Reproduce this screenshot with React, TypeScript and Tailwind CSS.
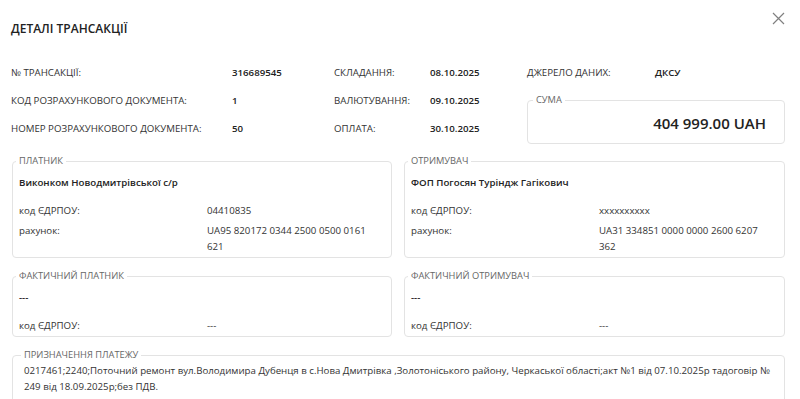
import { ReactNode } from "react";

const INFO = [
  ["№ ТРАНСАКЦІЇ:", "316689545", "СКЛАДАННЯ:", "08.10.2025"],
  ["КОД РОЗРАХУНКОВОГО ДОКУМЕНТА:", "1", "ВАЛЮТУВАННЯ:", "09.10.2025"],
  ["НОМЕР РОЗРАХУНКОВОГО ДОКУМЕНТА:", "50", "ОПЛАТА:", "30.10.2025"],
];

function Box({ title, children, className = "" }: { title: string; children: ReactNode; className?: string }) {
  return (
    <fieldset className={`rounded-[4px] border border-[#e3e3e3] ${className}`}>
      <legend className="-ml-[3px] px-[3px] text-left text-[9.3px] leading-[12px] text-[#666]">{title}</legend>
      {children}
    </fieldset>
  );
}

function Party({ title, name, code, account }: { title: string; name: string; code: string; account?: string }) {
  return (
    <Box title={title} className="px-[6px] pb-[2px]">
      <div className="pt-[8px] font-semibold leading-[16px] text-[#222]">{name}</div>
      <div className="mt-[12px] flex flex-col gap-[4px]">
        <div className="grid grid-cols-[188px_1fr] leading-[16px]">
          <span>код ЄДРПОУ:</span>
          <span>{code}</span>
        </div>
        {account && (
          <div className="grid grid-cols-[188px_1fr] leading-[16px]">
            <span>рахунок:</span>
            <span className="pr-[8px]">{account}</span>
          </div>
        )}
      </div>
    </Box>
  );
}

export default function App() {
  return (
    <div className="min-h-[399px] bg-white pl-[11px] pr-[15px] font-['Open_Sans',sans-serif] text-[9.7px] text-[#333]">
      {/* заголовок */}
      <div className="flex items-start justify-between pt-[12px]">
        <h2 className="mt-[9px] text-[12px] font-semibold leading-[16px] text-[#222]">ДЕТАЛІ ТРАНСАКЦІЇ</h2>
        <button className="text-[#808080]">
          <svg width="13" height="13" viewBox="0 0 13 13" fill="none" stroke="currentColor" strokeWidth="1.2">
            <path d="M1 1l11 11M12 1L1 12" />
          </svg>
        </button>
      </div>

      {/* основні дані */}
      <div className="mt-[22px] flex">
        <div className="grid w-[516px] grid-cols-[221px_102px_96px_97px]">
          {INFO.map((row) => (
            <div key={row[0]} className="contents">
              <div className="flex h-[28px] items-center">{row[0]}</div>
              <div className="flex h-[28px] items-center font-semibold text-[#222]">{row[1]}</div>
              <div className="flex h-[28px] items-center">{row[2]}</div>
              <div className="flex h-[28px] items-center font-semibold text-[#222]">{row[3]}</div>
            </div>
          ))}
        </div>
        <div className="flex-1">
          <div className="grid h-[28px] grid-cols-[128px_1fr] items-center">
            <span>ДЖЕРЕЛО ДАНИХ:</span>
            <span className="font-semibold text-[#222]">ДКСУ</span>
          </div>
          <Box title="СУМА" className="mt-[7px] pb-[10px] pl-[8px] pr-[18px] pt-[7px]">
            <div className="text-right text-[15px] font-semibold leading-[20px] text-[#222]">404 999.00 UAH</div>
          </Box>
        </div>
      </div>

      {/* платник / отримувач */}
      <div className="mt-[11px] grid grid-cols-[380px_1fr] gap-x-[12px] gap-y-[12px] pl-[1px]">
        <Party
          title="ПЛАТНИК"
          name="Виконком Новодмитрівської с/р"
          code="04410835"
          account="UA95 820172 0344 2500 0500 0161 621"
        />
        <Party
          title="ОТРИМУВАЧ"
          name="ФОП Погосян Туріндж Гагікович"
          code="xxxxxxxxxx"
          account="UA31 334851 0000 0000 2600 6207 362"
        />
        <Party title="ФАКТИЧНИЙ ПЛАТНИК" name="---" code="---" />
        <Party title="ФАКТИЧНИЙ ОТРИМУВАЧ" name="---" code="---" />
      </div>

      {/* призначення */}
      <Box title="ПРИЗНАЧЕННЯ ПЛАТЕЖУ" className="ml-[1px] mt-[12px] pb-[20px] pl-[11px] pr-[12px] pt-[2px]">
        <p className="leading-[16px]">
          0217461;2240;Поточний ремонт вул.Володимира Дубенця в с.Нова Дмитрівка ,Золотоніського району, Черкаської області;акт №1 від 07.10.2025р тадоговір № 249 від 18.09.2025р;без ПДВ.
        </p>
      </Box>
    </div>
  );
}
